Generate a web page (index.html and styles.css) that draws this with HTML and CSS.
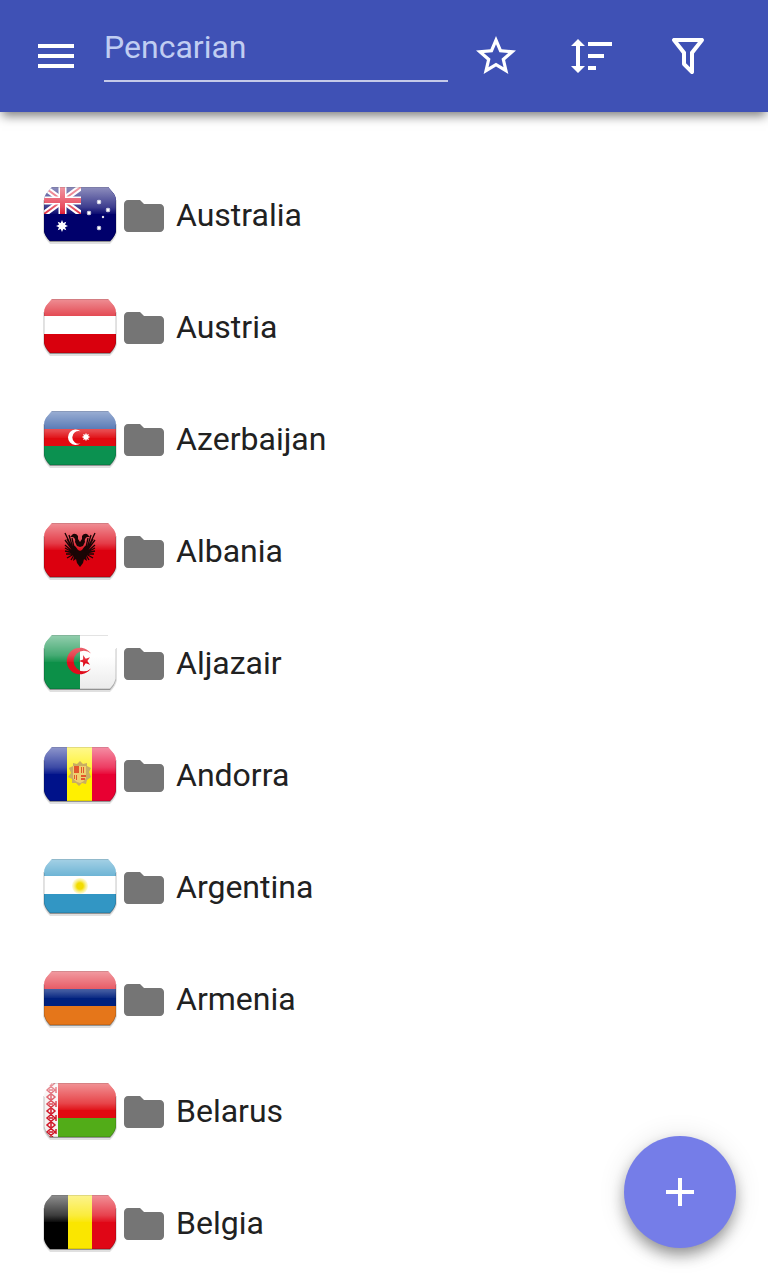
FILE: index.html
```
<!DOCTYPE html>
<html lang="id">

<head>
  <meta charset="UTF-8">
  <meta name="viewport" content="width=device-width, initial-scale=1.0">
  <title>Pencarian</title>

  <link rel="stylesheet" href="styles.css">
</head>

<body>
  <!-- Shared flag parts -->
  <svg class="defs" width="0" height="0" aria-hidden="true">
    <defs>
      <clipPath id="flag-clip">
        <path d="M12 3H68L74 10Q76 13 76 17V47Q75 52 70 57H10Q5 52 4 47V17Q4 13 6 10Z" />
      </clipPath>
      <linearGradient id="shine" x1="0" y1="0" x2="0" y2="1">
        <stop offset="0" stop-color="#fff" stop-opacity=".56" />
        <stop offset=".75" stop-color="#fff" stop-opacity=".24" />
        <stop offset="1" stop-color="#fff" stop-opacity=".04" />
      </linearGradient>
      <radialGradient id="sun">
        <stop offset=".4" stop-color="#f2dc00" />
        <stop offset="1" stop-color="#f8ee80" stop-opacity=".3" />
      </radialGradient>
      <linearGradient id="pearl" x1="0" y1="0" x2="0" y2="1">
        <stop offset=".4" stop-color="#fff" />
        <stop offset="1" stop-color="#ebebeb" />
      </linearGradient>
      <path id="star5" d="M0-10 2.2-3.1 9.5-3.1 3.6 1.2 5.9 8.1 0 3.8-5.9 8.1-3.6 1.2-9.5-3.1-2.2-3.1Z" />
      <path id="star8" d="M0-10 2.1-5.1 7.1-7.1 5.1-2.1 10 0 5.1 2.1 7.1 7.1 2.1 5.1 0 10-2.1 5.1-7.1 7.1-5.1 2.1-10 0-5.1-2.1-7.1-7.1-2.1-5.1Z" />
      <g id="gloss">
        <path fill="url(#shine)" d="M4 3H76V30H4Z" />
        <path fill="none" stroke="#000" stroke-opacity=".22" stroke-width="1" d="M12 3H68M76 17V47Q75 52 70 57H10Q5 52 4 47V17" />
      </g>
      <g id="flag-shadow">
        <path fill="#000" fill-opacity=".12" d="M3 16H77V48Q76 54 70 60H10Q4 54 3 48Z" />
        <path fill="#000" fill-opacity=".35" d="M4 47Q5 53 10 58H70Q75 53 76 47Z" />
      </g>
      <path id="folder" d="M10 4H4c-1.1 0-1.99.9-1.99 2L2 18c0 1.1.9 2 2 2h16c1.1 0 2-.9 2-2V8c0-1.1-.9-2-2-2h-8l-2-2z" />
      <!-- half of the eagle, mirrored around x=40 -->
      <g id="eagle-half">
        <path d="M40 22L38 19 38 16Q36 13 33 14L30 17 33 17Q36 19 35 22L37 26 40 27V47L37 43 36 39 33 41 34 36 32 33 33 25Q36 26 38 30L40 31Z" />
        <path fill="none" stroke="#1a0505" stroke-width="1.300" d="M35 32L32 18M34 32L29 15M34 32L27 19M34 32L25 13M34 32L25 20M34 33L25 25M34 33L25 28M34 33L25 31M34 34L26 34M34 34L27 38M34 35L31 40" />
      </g>
    </defs>
  </svg>

  <header class="toolbar">
    <button class="menu-btn" aria-label="Menu">
      <svg class="icon" viewBox="0 0 24 24"><path d="M3 18h18v-2H3v2zm0-5h18v-2H3v2zm0-7v2h18V6H3z" /></svg>
    </button>
    <input class="search" type="text" placeholder="Pencarian" aria-label="Pencarian">
    <button class="action" aria-label="Favorit">
      <svg class="icon" viewBox="0 0 24 24"><path d="M22 9.240l-7.190-.62L12 2 9.190 8.630 2 9.240l5.460 4.730L5.820 21 12 17.270 18.180 21l-1.630-7.030L22 9.240zM12 15.400l-3.760 2.270 1-4.280-3.320-2.880 4.380-.38L12 6.100l1.710 4.040 4.380.38-3.320 2.880 1 4.280L12 15.400z" /></svg>
    </button>
    <button class="action" aria-label="Urutkan">
      <svg class="icon" viewBox="0 0 24 24"><path d="M6 7h2.500L5 3.500 1.500 7H4v10H1.500L5 20.500 8.500 17H6V7zM10 5h12v2H10zM10 11h8v2h-8zM10 17h4v2h-4z" /></svg>
    </button>
    <button class="action" aria-label="Filter">
      <svg class="icon" viewBox="0 0 24 24"><path d="M15 19.880C15.040 20.180 14.940 20.500 14.710 20.710C14.320 21.100 13.690 21.100 13.300 20.710L9.290 16.700C9.060 16.470 8.960 16.160 9 15.870V10.750L4.210 4.620C3.870 4.190 3.950 3.560 4.380 3.220C4.570 3.080 4.780 3 5 3H19C19.220 3 19.430 3.080 19.620 3.220C20.050 3.560 20.130 4.190 19.790 4.620L15 10.750V19.880M7.040 5L11 10.060V15.580L13 17.580V10.050L16.960 5H7.040Z" /></svg>
    </button>
  </header>

  <main>
    <ul class="countries">
      <li><a class="country" href="#australia">
        <svg class="flag" viewBox="0 0 80 64">
          <use href="#flag-shadow" />
          <g clip-path="url(#flag-clip)">
            <path fill="#00006b" d="M4 3h72v54H4z" />
            <path stroke="#fff" stroke-width="6" d="M4 3L41 30M41 3L4 30" />
            <path stroke="#e0283c" stroke-width="2" d="M4 3L41 30M41 3L4 30" />
            <path stroke="#fff" stroke-width="8" d="M22.500 3V30M4 16.500H41" />
            <path stroke="#e0142d" stroke-width="5" d="M22.500 3V30M4 16.500H41" />
            <path fill="#00006b" d="M4 30h37V3h35v54H4z" />
            <use href="#gloss" />
            <g fill="#fff">
              <use href="#star8" transform="translate(22 42) scale(.6)" />
              <use href="#star8" transform="translate(59 18) scale(.28)" />
              <use href="#star8" transform="translate(49 29) scale(.28)" />
              <use href="#star8" transform="translate(68 26) scale(.28)" />
              <use href="#star8" transform="translate(63 33) scale(.16)" />
              <use href="#star8" transform="translate(59 44) scale(.28)" />
            </g>
          </g>
        </svg>
        <svg class="folder" viewBox="0 0 24 24"><use href="#folder" /></svg>
        <span class="name">Australia</span>
      </a></li>

      <li><a class="country" href="#austria">
        <svg class="flag" viewBox="0 0 80 64">
          <use href="#flag-shadow" />
          <g clip-path="url(#flag-clip)">
            <path fill="#d9000d" d="M4 3h72v54H4z" />
            <path fill="#fff" d="M4 20h72v18H4z" />
            <use href="#gloss" />
          </g>
        </svg>
        <svg class="folder" viewBox="0 0 24 24"><use href="#folder" /></svg>
        <span class="name">Austria</span>
      </a></li>

      <li><a class="country" href="#azerbaijan">
        <svg class="flag" viewBox="0 0 80 64">
          <use href="#flag-shadow" />
          <g clip-path="url(#flag-clip)">
            <path fill="#1d4a9c" d="M4 3h72v18H4z" />
            <path fill="#e00a10" d="M4 21h72v17H4z" />
            <path fill="#0b9150" d="M4 38h72v19H4z" />
            <use href="#gloss" />
            <path fill="#fff" d="M40.500 23.300A7.700 7.700 0 1 0 40.500 35.300A6.300 6.300 0 1 1 40.500 23.300Z" />
            <use href="#star8" fill="#fff" transform="translate(46 29) scale(.42)" />
          </g>
        </svg>
        <svg class="folder" viewBox="0 0 24 24"><use href="#folder" /></svg>
        <span class="name">Azerbaijan</span>
      </a></li>

      <li><a class="country" href="#albania">
        <svg class="flag" viewBox="0 0 80 64">
          <use href="#flag-shadow" />
          <g clip-path="url(#flag-clip)">
            <path fill="#dc000f" d="M4 3h72v54H4z" />
            <use href="#gloss" />
            <g fill="#1a0505">
              <use href="#eagle-half" />
              <use href="#eagle-half" transform="translate(80 0) scale(-1 1)" />
            </g>
          </g>
        </svg>
        <svg class="folder" viewBox="0 0 24 24"><use href="#folder" /></svg>
        <span class="name">Albania</span>
      </a></li>

      <li><a class="country" href="#aljazair">
        <svg class="flag" viewBox="0 0 80 64">
          <use href="#flag-shadow" />
          <g clip-path="url(#flag-clip)">
            <path fill="#0c9048" d="M4 3h36v54H4z" />
            <path fill="url(#pearl)" d="M40 3h36v54H40z" />
            <path fill="#e00c1c" d="M51 21.500A13.300 13.300 0 1 0 51 36.500A10.300 10.300 0 1 1 51 21.500Z" />
            <use href="#star5" fill="#e00c1c" transform="translate(45 29) rotate(-18) scale(.62)" />
            <use href="#gloss" />
          </g>
        </svg>
        <svg class="folder" viewBox="0 0 24 24"><use href="#folder" /></svg>
        <span class="name">Aljazair</span>
      </a></li>

      <li><a class="country" href="#andorra">
        <svg class="flag" viewBox="0 0 80 64">
          <use href="#flag-shadow" />
          <g clip-path="url(#flag-clip)">
            <path fill="#00128a" d="M4 3h23v54H4z" />
            <path fill="#fff000" d="M27 3h25v54H27z" />
            <path fill="#e80032" d="M52 3h24v54H52z" />
            <use href="#gloss" />
            <path fill="#c8ae62" d="M40 17L43 20 47 19 47 22 51 24 49 28 51 33 47 36 46 40 42 39 39 42 36 39 32 39 32 35 28 33 31 29 29 24 33 22 33 19 37 20Z" />
            <path fill="#eed070" d="M33 22H46V34Q44 38 40 39 35 38 33 34Z" />
            <path fill="#e2572c" d="M34 22H39V29H34ZM41 23H42V29H41ZM43 23H44V29H43ZM34 31H35V35H34ZM36 31H37V36H36ZM41 31H46V33H41ZM41 34H45V36H41Z" />
          </g>
        </svg>
        <svg class="folder" viewBox="0 0 24 24"><use href="#folder" /></svg>
        <span class="name">Andorra</span>
      </a></li>

      <li><a class="country" href="#argentina">
        <svg class="flag" viewBox="0 0 80 64">
          <use href="#flag-shadow" />
          <g clip-path="url(#flag-clip)">
            <path fill="#3296c4" d="M4 3h72v54H4z" />
            <path fill="#fff" d="M4 20h72v18H4z" />
            <use href="#gloss" />
            <circle cx="40" cy="30" r="8" fill="url(#sun)" />
          </g>
        </svg>
        <svg class="folder" viewBox="0 0 24 24"><use href="#folder" /></svg>
        <span class="name">Argentina</span>
      </a></li>

      <li><a class="country" href="#armenia">
        <svg class="flag" viewBox="0 0 80 64">
          <use href="#flag-shadow" />
          <g clip-path="url(#flag-clip)">
            <path fill="#e01e2c" d="M4 3h72v18H4z" />
            <path fill="#00217e" d="M4 21h72v17H4z" />
            <path fill="#e5761a" d="M4 38h72v19H4z" />
            <use href="#gloss" />
          </g>
        </svg>
        <svg class="folder" viewBox="0 0 24 24"><use href="#folder" /></svg>
        <span class="name">Armenia</span>
      </a></li>

      <li><a class="country" href="#belarus">
        <svg class="flag" viewBox="0 0 80 64">
          <use href="#flag-shadow" />
          <g clip-path="url(#flag-clip)">
            <path fill="#e00a10" d="M18 3h58v35H18z" />
            <path fill="#52ac18" d="M18 38h58v19H18z" />
            <path fill="#f6f0f0" d="M4 3h14v54H4z" />
            <path fill="none" stroke="#d01828" stroke-width="1.500" d="M7 3L15 10 7 17 15 24 7 31 15 38 7 45 15 52 9 57M15 3L7 10 15 17 7 24 15 31 7 38 15 45 7 52 13 57M11 3V5M9 10H13M11 15V19M9 24H13M11 29V33M9 38H13M11 43V47M9 52H13M16 7V13M16 21V27M16 35V41M16 49V54" />
            <use href="#gloss" />
          </g>
        </svg>
        <svg class="folder" viewBox="0 0 24 24"><use href="#folder" /></svg>
        <span class="name">Belarus</span>
      </a></li>

      <li><a class="country" href="#belgia">
        <svg class="flag" viewBox="0 0 80 64">
          <use href="#flag-shadow" />
          <g clip-path="url(#flag-clip)">
            <path fill="#000" d="M4 3h24v54H4z" />
            <path fill="#fae600" d="M28 3h24v54H28z" />
            <path fill="#e00616" d="M52 3h24v54H52z" />
            <use href="#gloss" />
          </g>
        </svg>
        <svg class="folder" viewBox="0 0 24 24"><use href="#folder" /></svg>
        <span class="name">Belgia</span>
      </a></li>
    </ul>
  </main>

  <button class="fab" aria-label="Tambah">
    <svg class="icon" viewBox="0 0 24 24"><path d="M19 13h-6v6h-2v-6H5v-2h6V5h2v6h6v2z" /></svg>
  </button>
</body>

</html>
```
FILE: styles.css
```
* {
  box-sizing: border-box;
}

body {
  background: #fff;
  color: #212121;
  font-family: Roboto, sans-serif;
  font-size: 32px;
  margin: 0;
}

button {
  align-items: center;
  background: none;
  border: 0;
  cursor: pointer;
  display: flex;
  justify-content: center;
  padding: 0;
}

.defs {
  display: block;
}

.icon {
  display: block;
  fill: #fff;
  height: 48px;
  width: 48px;
}

.toolbar {
  align-items: center;
  background: #3f51b5;
  box-shadow: 0 6px 10px -2px rgba(0, 0, 0, 0.5);
  display: flex;
  height: 112px;
  padding: 0 32px;
}

.menu-btn {
  margin-right: 24px;
}

.search {
  background: none;
  border: 0;
  border-bottom: 2px solid #c5cae9;
  color: #fff;
  flex: 1;
  font: inherit;
  height: 68px;
  line-height: 40px;
  margin-bottom: 16px;
  min-width: 0;
  outline: none;
  padding: 0;
}

.search::placeholder {
  color: #c0cdf2;
  opacity: 1;
}

.action {
  height: 96px;
  width: 96px;
}

.countries {
  list-style: none;
  margin: 0;
  padding: 48px 0 0;
}

.country {
  align-items: center;
  color: inherit;
  display: flex;
  height: 112px;
  padding: 0 40px;
  text-decoration: none;
}

.flag {
  flex: none;
  height: 64px;
  width: 80px;
}

.folder {
  fill: #757575;
  flex: none;
  height: 48px;
  margin-right: 8px;
  width: 48px;
}

.name {
  line-height: 40px;
  padding-bottom: 2px;
}

.fab {
  background: #757de8;
  border-radius: 50%;
  bottom: 32px;
  box-shadow: 0 8px 16px -2px rgba(0, 0, 0, 0.42), 0 2px 28px rgba(0, 0, 0, 0.12);
  height: 112px;
  position: fixed;
  right: 32px;
  width: 112px;
}
```
